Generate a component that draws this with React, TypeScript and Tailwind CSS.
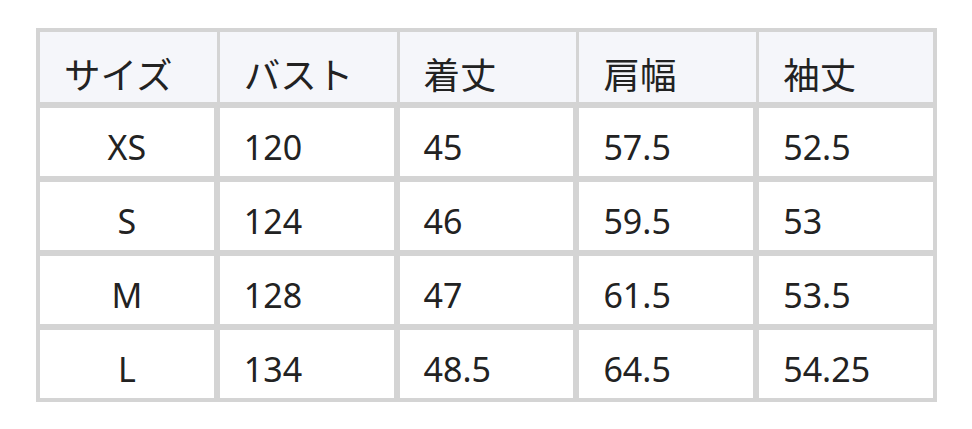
import React from "react";

const HEADERS = ["サイズ", "バスト", "着丈", "肩幅", "袖丈"];

const ROWS: string[][] = [
  ["XS", "120", "45", "57.5", "52.5"],
  ["S", "124", "46", "59.5", "53"],
  ["M", "128", "47", "61.5", "53.5"],
  ["L", "134", "48.5", "64.5", "54.25"],
];

export default function App() {
  return (
    <div
      className="w-[972px] h-[429px] bg-white pt-[28px] pl-[36px]"
      style={{ fontFamily: '"Noto Sans", "Noto Sans CJK JP", sans-serif' }}
    >
      <table className="w-[901px] table-fixed border-separate border-spacing-0 border border-[#d4d4d4] text-[34px] text-[#222]">
        <thead>
          <tr>
            {HEADERS.map((h, i) => (
              <th
                key={h}
                className={`h-[76px] bg-[#f5f6fa] border-[#d4d4d4] border-t-[3px] border-b-[3px] border-l-[3px] ${
                  i === HEADERS.length - 1 ? "border-r-[3px]" : ""
                } pl-6 pt-[16px] text-left text-[36.5px] font-normal align-middle leading-none`}
              >
                {h}
              </th>
            ))}
          </tr>
        </thead>
        <tbody>
          {ROWS.map((row) => (
            <tr key={row[0]}>
              {row.map((v, i) => (
                <td
                  key={i}
                  className={`h-[74px] border-[3px] border-[#d4d4d4] pt-[10px] align-middle leading-none ${
                    i === 0 ? "text-center" : "text-left pl-6"
                  }`}
                >
                  {v}
                </td>
              ))}
            </tr>
          ))}
        </tbody>
      </table>
    </div>
  );
}
